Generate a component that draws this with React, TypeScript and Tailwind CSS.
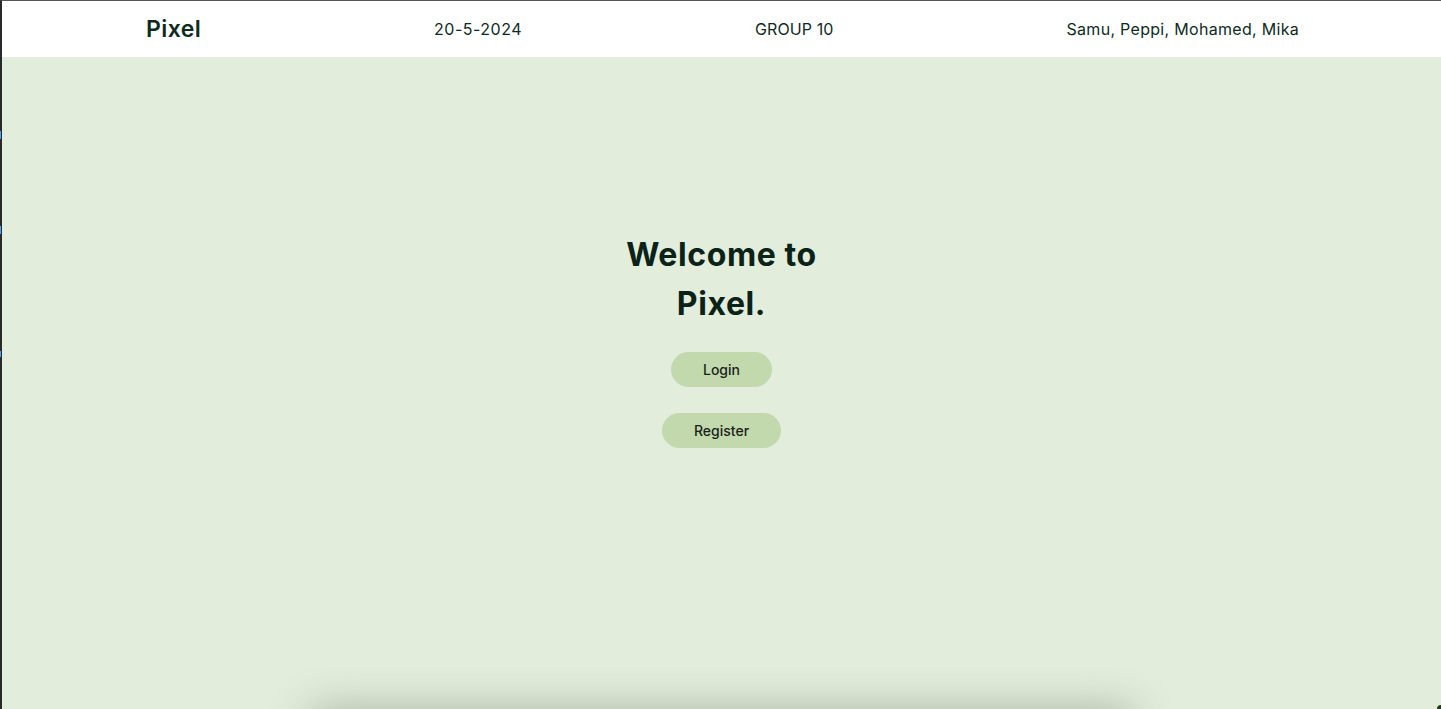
import React from "react";

export default function App() {
  return (
    <div
      className="relative h-[709px] w-[1441px] overflow-hidden bg-[#e2eddc]"
      style={{ fontFamily: "Inter, 'Noto Sans', sans-serif" }}
    >
      <div className="flex h-full flex-col border-l-2 border-t border-l-[#2a2a2a] border-t-[#555]">
        <header className="flex h-[56px] shrink-0 items-center justify-between bg-white pl-[144px] pr-[142px] text-[#0f2a1f]">
          <div className="text-[23px] font-semibold tracking-[0.4px]">Pixel</div>
          <div className="text-[16px] tracking-[0.5px]">20-5-2024</div>
          <div className="text-[16px] tracking-[0.1px]">GROUP 10</div>
          <div className="text-[16px] tracking-[0.3px]">Samu, Peppi, Mohamed, Mika</div>
        </header>
        <main className="relative flex flex-1 flex-col items-center pt-[173px]">
          <h1 className="w-[260px] text-center text-[32px] font-bold leading-[49px] tracking-[0.6px] text-[#0b2218]">
            Welcome to<br />Pixel.
          </h1>
          <div className="mt-[24px] flex flex-col items-center gap-[26px]">
            <button className="h-[35px] rounded-full bg-[#c2d9ae] px-[32px] text-[14px] font-medium text-[#1b1f1a]">
              Login
            </button>
            <button className="h-[35px] rounded-full bg-[#c2d9ae] px-[32px] text-[14px] font-medium text-[#1b1f1a]">
              Register
            </button>
          </div>
          <div className="absolute bottom-[-40px] left-[305px] h-[40px] w-[830px] rounded-[30px] bg-[#e2eddc] shadow-[0_0_40px_rgba(60,80,50,0.35)]" />
        </main>
      </div>
      <div className="absolute left-0 top-[131px] h-[8px] w-[1px] bg-[#4aa3ff]" />
      <div className="absolute left-0 top-[226px] h-[8px] w-[1px] bg-[#4aa3ff]" />
      <div className="absolute left-0 top-[351px] h-[6px] w-[1px] bg-[#4aa3ff]" />
      <div className="absolute bottom-0 right-0 h-[4px] w-[4px] rounded-tl-[4px] bg-[#1f3a1f]" />
    </div>
  );
}
